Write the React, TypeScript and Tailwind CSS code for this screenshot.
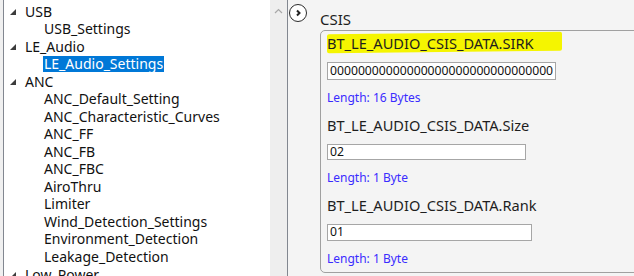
import React from "react";

type Node = { label: string; level: 0 | 1; selected?: boolean };

const nodes: Node[] = [
  { label: "USB", level: 0 },
  { label: "USB_Settings", level: 1 },
  { label: "LE_Audio", level: 0 },
  { label: "LE_Audio_Settings", level: 1, selected: true },
  { label: "ANC", level: 0 },
  { label: "ANC_Default_Setting", level: 1 },
  { label: "ANC_Characteristic_Curves", level: 1 },
  { label: "ANC_FF", level: 1 },
  { label: "ANC_FB", level: 1 },
  { label: "ANC_FBC", level: 1 },
  { label: "AiroThru", level: 1 },
  { label: "Limiter", level: 1 },
  { label: "Wind_Detection_Settings", level: 1 },
  { label: "Environment_Detection", level: 1 },
  { label: "Leakage_Detection", level: 1 },
  { label: "Low_Power", level: 0 },
];

const font = { fontFamily: '"Noto Sans", "Open Sans", Arial, sans-serif' };

function Expander() {
  return (
    <svg width="6" height="6" viewBox="0 0 6 6" className="block">
      <polygon points="6,0 6,6 0,6" fill="#3c3c3c" />
    </svg>
  );
}

function TreeRow({ node }: { node: Node }) {
  return (
    <div className="flex items-center h-[17.5px] text-[14px] leading-[17.5px] text-[#111]">
      {node.level === 0 ? (
        <>
          <div className="w-[21px] flex justify-end pr-[9px] pt-[1px]">
            <Expander />
          </div>
          <span className="whitespace-nowrap">{node.label}</span>
        </>
      ) : (
        <span
          className={
            "ml-[39px] whitespace-nowrap px-[1px] h-[16px] leading-[16px] " +
            (node.selected ? "bg-[#0078d7] text-white" : "")
          }
        >
          {node.label}
        </span>
      )}
    </div>
  );
}

function Field({
  label,
  value,
  width,
  height,
  len,
  highlight,
  first,
}: {
  label: string;
  value: string;
  width: string;
  height: string;
  len: string;
  highlight?: boolean;
  first?: boolean;
}) {
  return (
    <div>
      <div className={(first ? "mt-[2px] " : "mt-[9px] ") + "h-[21px] leading-[21px] text-[14.6px] text-[#1e1e1e]"}>
        {highlight ? (
          <span className="inline-block w-[235px] h-[19px] leading-[21px] bg-[#f5f500] -skew-y-[0.6deg] rounded-[2px]">
            <span className="inline-block skew-y-[0.6deg]">{label}</span>
          </span>
        ) : (
          label
        )}
      </div>
      <div
        className={
          "mt-[8px] bg-white border border-[#a6a6a6] pl-[2px] text-[12.2px] text-[#111] flex items-center overflow-hidden " +
          width +
          " " +
          height
        }
      >
        {value}
      </div>
      <div className="mt-[10px] h-[16px] leading-[16px] text-[12px] text-[#3a2cff]">{len}</div>
    </div>
  );
}

export default function App() {
  return (
    <div className="w-[634px] h-[276px] overflow-hidden flex bg-[#f0f0f0]" style={font}>
      {/* tree view */}
      <div className="ml-[3px] flex border-l border-r border-[#828790] h-full">
        <div className="w-[266px] bg-white pt-[3px]">
          {nodes.map((n) => (
            <TreeRow key={n.label} node={n} />
          ))}
        </div>
        <div className="w-[17px] bg-[#eeeeee] flex justify-center pt-[8px]">
          <svg width="9" height="6" viewBox="0 0 9 6">
            <polyline points="1,5 4.5,1.5 8,5" fill="none" stroke="#a8a8a8" strokeWidth="1.2" />
          </svg>
        </div>
      </div>

      {/* detail panel */}
      <div className="flex-1 bg-[#f4f4f4] flex">
        <div className="ml-[1px] mt-[4px] w-[18px] h-[18px] rounded-full border border-[#2b2b2b] bg-white flex items-center justify-center shrink-0">
          <svg width="8" height="8" viewBox="0 0 8 8">
            <polyline points="3,1.5 5.5,4 3,6.5" fill="none" stroke="#222" strokeWidth="2" />
          </svg>
        </div>
        <div className="ml-[13px] pt-[10px] flex-1">
          <div className="h-[18px] leading-[18px] text-[15px] text-[#1e1e1e]">CSIS</div>
          <div className="mt-[2px] w-[340px] border border-[#a0a0a0] rounded-[5px] pl-[6px] pb-[5px]">
            <Field
              first
              highlight
              label="BT_LE_AUDIO_CSIS_DATA.SIRK"
              value="00000000000000000000000000000000"
              width="w-[229px]"
              height="h-[18px]"
              len="Length: 16 Bytes"
            />
            <Field
              label="BT_LE_AUDIO_CSIS_DATA.Size"
              value="02"
              width="w-[199px]"
              height="h-[16px]"
              len="Length: 1 Byte"
            />
            <Field
              label="BT_LE_AUDIO_CSIS_DATA.Rank"
              value="01"
              width="w-[205px]"
              height="h-[17px]"
              len="Length: 1 Byte"
            />
          </div>
        </div>
      </div>
    </div>
  );
}
